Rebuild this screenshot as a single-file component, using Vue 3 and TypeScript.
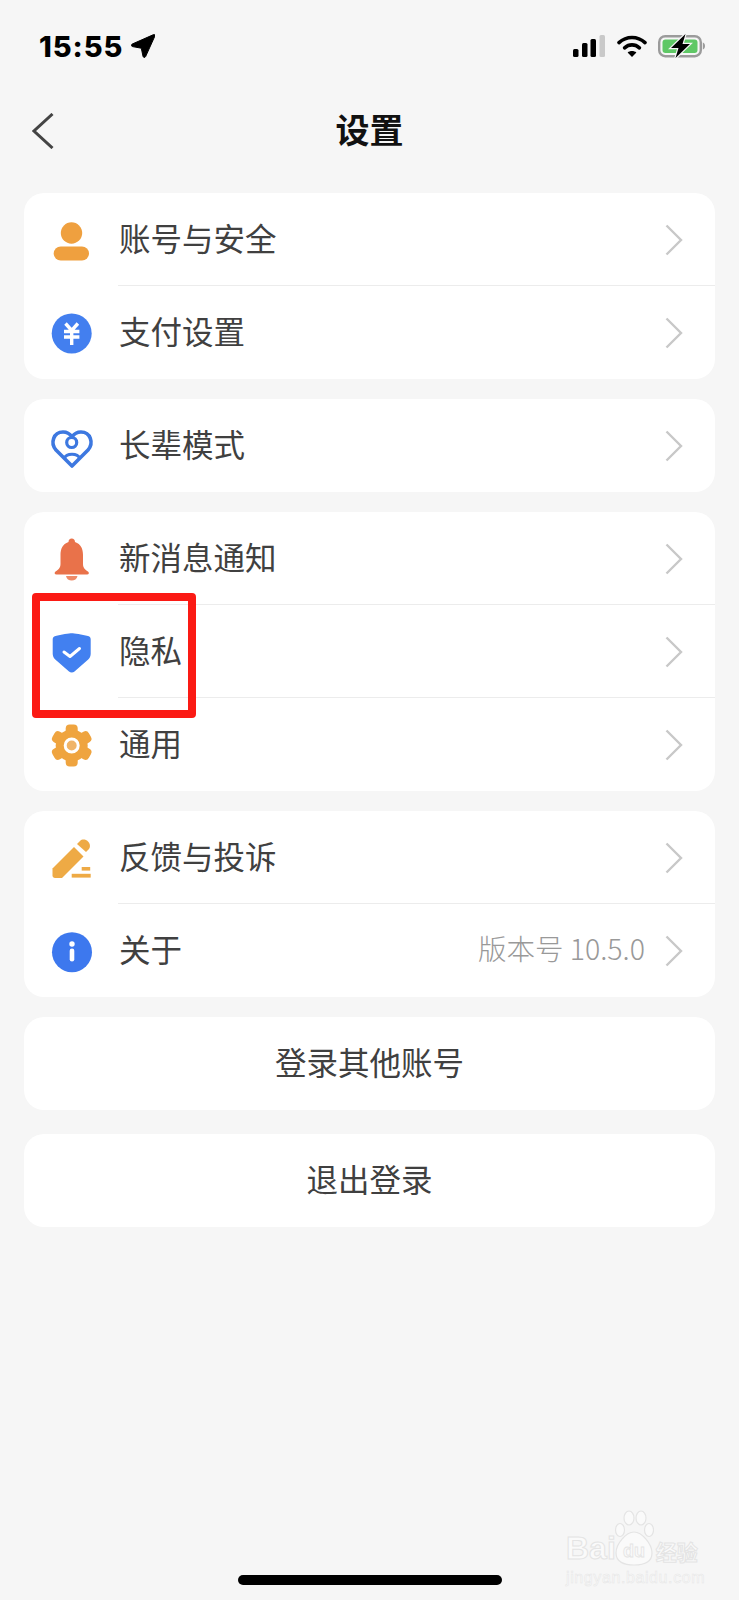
<script setup lang="ts">
interface Row {
  icon: string
  label: string
  value?: string
}

const groups: Row[][] = [
  [
    { icon: 'user', label: '账号与安全' },
    { icon: 'pay', label: '支付设置' },
  ],
  [{ icon: 'heart', label: '长辈模式' }],
  [
    { icon: 'bell', label: '新消息通知' },
    { icon: 'shield', label: '隐私' },
    { icon: 'gear', label: '通用' },
  ],
  [
    { icon: 'pen', label: '反馈与投诉' },
    { icon: 'info', label: '关于', value: '版本号 10.5.0' },
  ],
]

const actions = ['登录其他账号', '退出登录']
</script>

<template>
  <div class="page">
    <div class="status-bar">
      <div class="status-left">
        <span class="time">15:55</span>
        <svg class="arrow" width="24" height="24" viewBox="0 0 24 24">
          <path d="M22.6 .6 C23.6 .2 24.3 1 23.9 2 L14.6 22.6 C14 23.9 12.3 23.7 12 22.3 L10.3 14.2 L1.6 12.6 C.2 12.3 0 10.6 1.3 10 Z" fill="#000" stroke="#000" stroke-width="1" stroke-linejoin="round" />
        </svg>
      </div>
      <div class="status-right">
        <svg width="32" height="22" viewBox="0 0 32 22">
          <rect x="0" y="14" width="5.5" height="8" rx="1.5" fill="#000" />
          <rect x="9" y="8" width="5.5" height="14" rx="1.5" fill="#000" />
          <rect x="17.5" y="4" width="5.5" height="18" rx="1.5" fill="#000" />
          <rect x="26.5" y="0" width="5.5" height="22" rx="1.5" fill="#c9c9c9" />
        </svg>
        <svg class="wifi" width="30" height="22" viewBox="0 0 30 22">
          <path d="M2 7.6 C9.5 .8 20.5 .8 28 7.6" fill="none" stroke="#000" stroke-width="3.6" stroke-linecap="round" />
          <path d="M7.6 12.8 C12 8.9 18 8.9 22.4 12.8" fill="none" stroke="#000" stroke-width="3.6" stroke-linecap="round" />
          <path d="M15 22 L10.6 17.4 C13 15.4 17 15.4 19.4 17.4 Z" fill="#000" />
        </svg>
        <svg class="battery" width="47" height="24" viewBox="0 0 47 24">
          <rect x="1.2" y="2.2" width="41.6" height="20" rx="6" fill="none" stroke="#9b9b9b" stroke-width="2.4" />
          <rect x="4.5" y="5.5" width="35" height="13.6" rx="3" fill="#5fc866" />
          <path d="M44.8 8.5 C46.2 9 47 10.4 47 12 C47 13.6 46.2 15 44.8 15.5 Z" fill="#9b9b9b" />
          <path d="M27.5 0 L13 14 H20.5 L17.5 24 L32 10 H24.5 Z" fill="#000" stroke="#f6f6f6" stroke-width="2.4" paint-order="stroke" />
        </svg>
      </div>
    </div>

    <div class="nav">
      <svg class="back" width="22" height="36" viewBox="0 0 22 36">
        <path d="M20.5 1 L2 18 L20.5 35" fill="none" stroke="#444" stroke-width="3" />
      </svg>
      <span class="title">设置</span>
    </div>

    <div class="list">
      <div v-for="(group, i) in groups" :key="i" class="card">
        <div v-for="(row, j) in group" :key="row.label" class="row">
          <svg class="icon" width="44" height="44" viewBox="0 0 44 44">
            <template v-if="row.icon === 'user'">
              <circle cx="21.5" cy="15" r="10.7" fill="#efa03f" />
              <rect x="3.7" y="28.5" width="35.3" height="14" rx="7" fill="#efa03f" />
            </template>
            <template v-else-if="row.icon === 'pay'">
              <circle cx="21.7" cy="22.4" r="20" fill="#437fef" />
              <path d="M15.5 12.5 L21.7 19.5 L27.9 12.5 M14 20.5 H29.4 M14 26 H29.4 M21.7 19.5 V34" fill="none" stroke="#fff" stroke-width="3.4" />
            </template>
            <template v-else-if="row.icon === 'heart'">
              <path d="M22 42 L6 26 C0 19 3.5 8 13 8 C17 8 20 10 22 13 C24 10 27 8 31 8 C40.5 8 44 19 38 26 Z" fill="none" stroke="#3d78e0" stroke-width="3.6" stroke-linejoin="round" />
              <circle cx="21.7" cy="18.5" r="5" fill="none" stroke="#3d78e0" stroke-width="3.2" />
              <path d="M14.5 34 C16.5 29 27.5 29 29.5 34" fill="none" stroke="#3d78e0" stroke-width="3.2" />
            </template>
            <template v-else-if="row.icon === 'bell'">
              <path d="M21.7 1.5 C23.7 1.5 25 3 25 5 C31 7 33 12 33 18 V27 C33 31 35.5 33 38 34.5 C39.5 35.5 39 37.5 37 37.5 H6.5 C4.5 37.5 4 35.5 5.5 34.5 C8 33 10.5 31 10.5 27 V18 C10.5 12 12.5 7 18.5 5 C18.5 3 19.7 1.5 21.7 1.5 Z" fill="#e9724a" />
              <path d="M16 39 H27.5 C27 42 24.5 43.5 21.7 43.5 C19 43.5 16.5 42 16 39 Z" fill="#ee8a68" />
            </template>
            <template v-else-if="row.icon === 'shield'">
              <path d="M21.7 3.2 C24 3.2 32 4.5 38 6 C40 6.5 40.7 7.5 40.7 9.5 V24 C40.7 27 39 29 36.5 31 L24.5 41.5 C23 42.8 20.5 42.8 19 41.5 L7 31 C4.5 29 2.7 27 2.7 24 V9.5 C2.7 7.5 3.5 6.5 5.5 6 C11 4.5 19.5 3.2 21.7 3.2 Z" fill="#4280f0" />
              <path d="M14 22 L20 26.5 L29.5 18.5" fill="none" stroke="#fff" stroke-width="3" stroke-linecap="round" stroke-linejoin="round" />
            </template>
            <template v-else-if="row.icon === 'gear'">
              <circle cx="21.7" cy="22.5" r="16" fill="#efa43f" />
              <rect x="15.7" y="1.5" width="12" height="42" rx="4" fill="#efa43f" />
              <rect x="15.7" y="1.5" width="12" height="42" rx="4" fill="#efa43f" transform="rotate(60 21.7 22.5)" />
              <rect x="15.7" y="1.5" width="12" height="42" rx="4" fill="#efa43f" transform="rotate(120 21.7 22.5)" />
              <circle cx="21.7" cy="22.5" r="6.5" fill="#f0b468" stroke="#fff" stroke-width="3" />
            </template>
            <template v-else-if="row.icon === 'pen'">
              <path d="M2.5 32.5 L24 11 L33.5 20.5 L12 42 H5 C3.5 42 2.5 41 2.5 39.5 Z" fill="#eeaa45" />
              <path d="M27 8 L30 5 C32 3 35.5 3 38 5.5 C40.5 8 40.5 11.5 38.5 13.5 L36 16 Z" fill="#eeaa45" />
              <rect x="31.7" y="31" width="8.5" height="3.6" fill="#eeaa45" />
              <rect x="21.7" y="37.8" width="19" height="3.8" fill="#eeaa45" />
            </template>
            <template v-else>
              <circle cx="22" cy="23.2" r="20" fill="#3d78ee" />
              <circle cx="22" cy="15" r="2.7" fill="#fff" />
              <rect x="19.7" y="19.5" width="4.6" height="13" rx="2.3" fill="#fff" />
            </template>
          </svg>
          <div class="row-body" :class="{ divided: j > 0 }">
            <span class="label">{{ row.label }}</span>
            <span v-if="row.value" class="value">{{ row.value }}</span>
            <svg class="chevron" width="18" height="32" viewBox="0 0 18 32">
              <path d="M1.5 1.5 L16 16 L1.5 30.5" fill="none" stroke="#c8c8c8" stroke-width="2.4" />
            </svg>
          </div>
        </div>
      </div>
      <div v-for="text in actions" :key="text" class="card action">{{ text }}</div>
    </div>

    <div class="home-bar"></div>

    <!-- red highlight drawn over the 隐私 row -->
    <div class="highlight"></div>

    <div class="watermark">
      <div class="wm-top">
        <span>Bai</span>
        <svg width="40" height="56" viewBox="0 0 40 56">
          <g fill="#fafafa" stroke="#e4e4e4" stroke-width="1.2">
            <ellipse cx="6" cy="20" rx="4.5" ry="6.5" />
            <ellipse cx="15" cy="8" rx="5" ry="7" />
            <ellipse cx="27" cy="8" rx="5" ry="7" />
            <ellipse cx="35" cy="20" rx="4.5" ry="6.5" />
            <path d="M20 22 C28 22 38 34 38 43 C38 52 30 55 20 55 C10 55 2 52 2 43 C2 34 12 22 20 22 Z" />
          </g>
          <text x="20" y="47" text-anchor="middle" class="wm-du">du</text>
        </svg>
        <span class="wm-cn">经验</span>
      </div>
      <div class="wm-url">jingyan.baidu.com</div>
    </div>
  </div>
</template>

<style>
body {
  background: #f6f6f6;
}
</style>

<style scoped>
.page {
  position: relative;
  display: flex;
  flex-direction: column;
  height: 1600px;
  background: #f6f6f6;
  font-family: "Noto Sans CJK SC", "Noto Sans", sans-serif;
  color: #404040;
  overflow: hidden;
}

.status-bar {
  display: flex;
  align-items: center;
  justify-content: space-between;
  height: 94px;
  padding: 0 34px 2px 39px;
  box-sizing: border-box;
}

.status-left,
.status-right {
  display: flex;
  align-items: center;
}

.time {
  font-family: Inter, "Liberation Sans", sans-serif;
  font-size: 29px;
  font-weight: 800;
  letter-spacing: 0.9px;
  color: #000;
}

.arrow {
  margin-left: 8px;
}

.wifi {
  margin-left: 12px;
}

.battery {
  margin-left: 11px;
}

.nav {
  position: relative;
  display: flex;
  align-items: center;
  justify-content: center;
  height: 74px;
  padding-bottom: 6px;
  box-sizing: border-box;
}

.back {
  position: absolute;
  left: 32px;
  top: 19px;
}

.title {
  font-size: 34px;
  font-weight: 700;
  color: #111;
}

.list {
  display: flex;
  flex-direction: column;
  gap: 20px;
  padding: 25px 24px 0;
}

.card {
  background: #fff;
  border-radius: 20px;
  overflow: hidden;
}

.row {
  display: flex;
  align-items: center;
  height: 93px;
  padding-left: 26px;
}

.icon {
  flex: none;
  overflow: visible;
  margin-right: 24px;
}

.row-body {
  flex: 1;
  display: flex;
  align-items: center;
  height: 100%;
  padding-right: 32px;
  box-sizing: border-box;
}

.row-body.divided {
  box-shadow: 0 -1px 0 #ececec;
}

.label {
  flex: 1;
  padding: 0 0 6px 1px;
  font-size: 31.5px;
}

.value {
  padding-bottom: 6px;
  font-size: 28.5px;
  font-weight: 300;
  color: #999;
  margin-right: 20px;
}

.action {
  display: flex;
  align-items: center;
  justify-content: center;
  height: 93px;
  padding-bottom: 6px;
  box-sizing: border-box;
  font-size: 31.5px;
}

.action:last-child {
  margin-top: 4px;
}

.home-bar {
  width: 264px;
  height: 10px;
  margin: auto auto 15px;
  border-radius: 5px;
  background: #000;
}

.highlight {
  position: absolute;
  left: 32px;
  top: 593px;
  width: 164px;
  height: 125px;
  box-sizing: border-box;
  border: 8px solid #fb1a14;
  border-radius: 4px;
}

.watermark {
  position: absolute;
  left: 566px;
  top: 1520px;
  width: 134px;
  color: #fafafa;
  -webkit-text-stroke: 1px #e4e4e4;
}

.wm-top {
  display: flex;
  align-items: flex-end;
  height: 46px;
  font-family: "Liberation Sans", sans-serif;
  font-size: 32px;
  font-weight: 700;
  line-height: 36px;
}

.wm-top svg {
  flex: none;
  margin: 0 2px 0 -2px;
}

.wm-du {
  font-size: 18px;
  font-weight: 700;
  fill: #fafafa;
  stroke: #e4e4e4;
  stroke-width: 0.8;
}

.wm-cn {
  font-family: "Noto Sans CJK SC", sans-serif;
  font-size: 21px;
  line-height: 30px;
}

.wm-url {
  margin-top: 4px;
  font-family: "Liberation Sans", sans-serif;
  font-size: 16px;
  line-height: 16px;
  letter-spacing: 0.6px;
  white-space: nowrap;
  -webkit-text-stroke: 0.5px #e6e6e6;
}
</style>
